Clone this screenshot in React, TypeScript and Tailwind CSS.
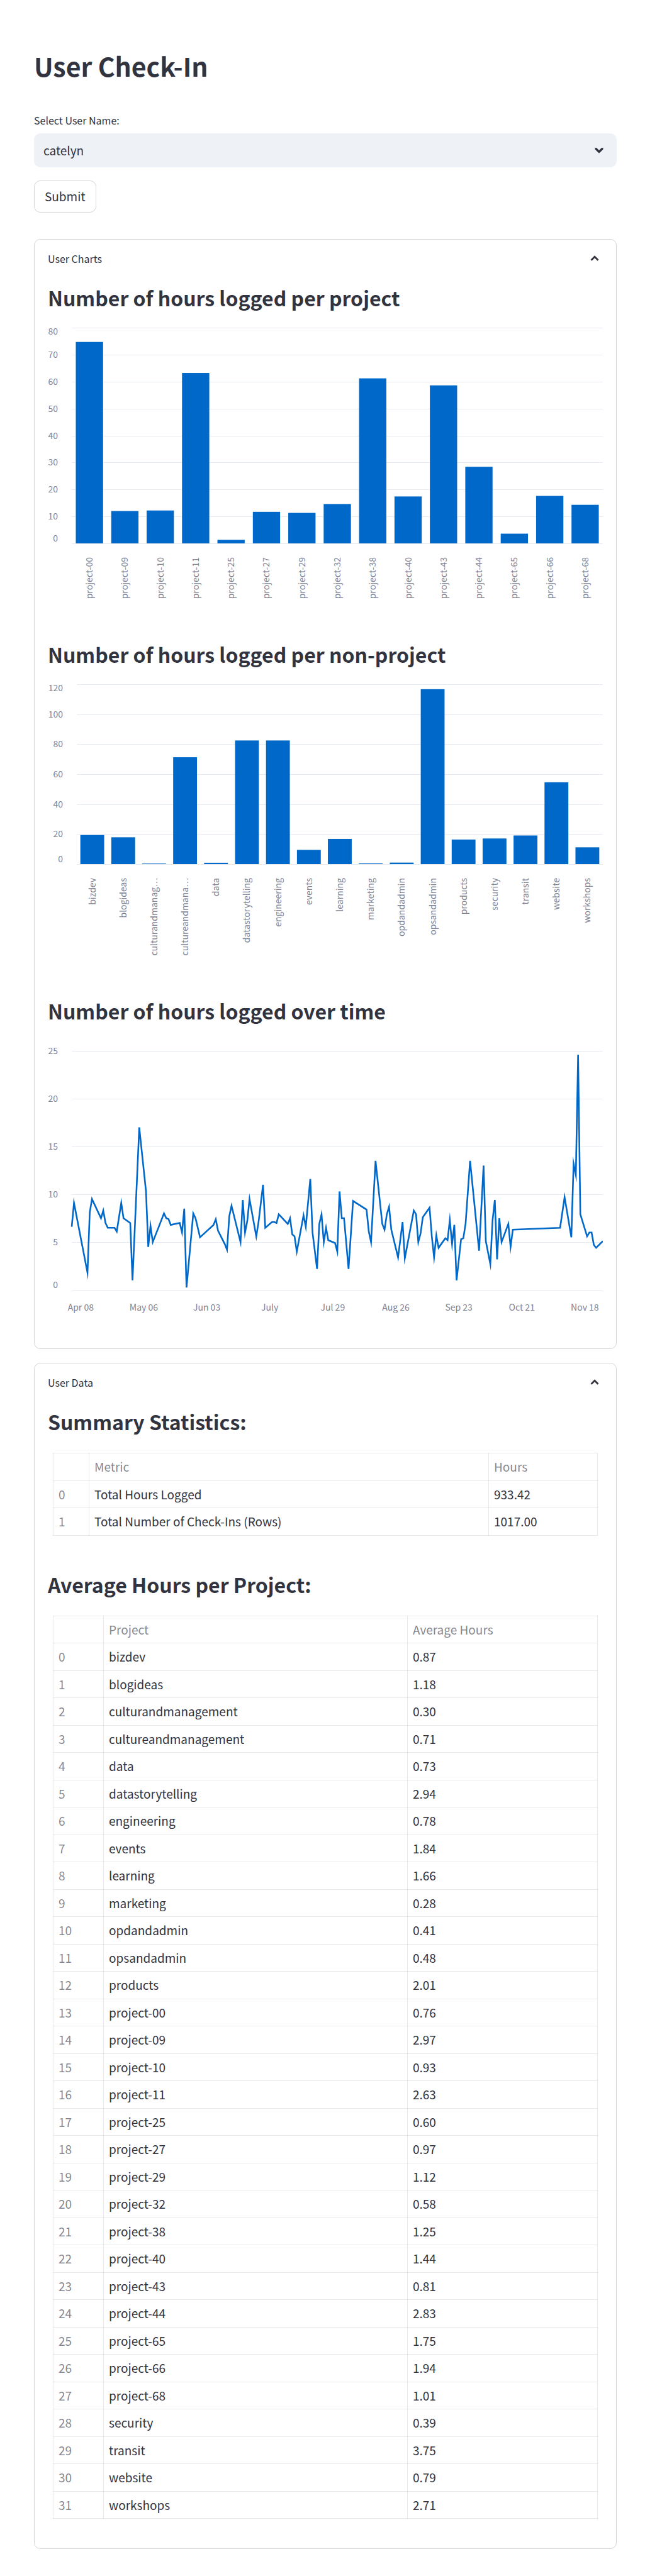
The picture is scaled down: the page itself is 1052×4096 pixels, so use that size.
import { ReactNode } from "react";
import { ChevronDown, ChevronUp } from "lucide-react";

type Bar = [label: string, hours: number];

const projectHours: Bar[] = [
  ["project-00", 74.7],
  ["project-09", 12],
  ["project-10", 12.2],
  ["project-11", 63.2],
  ["project-25", 1.3],
  ["project-27", 11.7],
  ["project-29", 11.3],
  ["project-32", 14.6],
  ["project-38", 61.2],
  ["project-40", 17.4],
  ["project-43", 58.6],
  ["project-44", 28.4],
  ["project-65", 3.6],
  ["project-66", 17.6],
  ["project-68", 14.3],
];

const nonProjectHours: Bar[] = [
  ["bizdev", 19.4],
  ["blogideas", 17.9],
  ["culturandmanag…", 0.4],
  ["cultureandmana…", 71.3],
  ["data", 0.9],
  ["datastorytelling", 82.5],
  ["engineering", 82.5],
  ["events", 9.5],
  ["learning", 16.8],
  ["marketing", 0.5],
  ["opdandadmin", 1],
  ["opsandadmin", 116.7],
  ["products", 16.4],
  ["security", 17.1],
  ["transit", 19.1],
  ["website", 54.6],
  ["workshops", 11.2],
];

// [day since start, hours]
const timeline: [number, number][] = [
  [0, 6.6], [1, 9.1], [7, 1.8], [8, 8.1], [9, 9.5], [13, 7.5], [14, 8.3], [15, 7], [16, 6.5], [19, 6.5],
  [20, 6.1], [22, 9.1], [23, 7.5], [26, 7], [27, 1], [30, 17], [33, 10.3], [34, 4.5], [35, 6.7], [36, 5],
  [41, 8], [42, 7.5], [43, 7.4], [44, 6.8], [48, 7], [49, 6], [50, 8.5], [51, 0.25], [54, 8], [55, 7.5],
  [57, 5.5], [63, 6.8], [64, 7.4], [65, 6.2], [68, 4.8], [69, 4.2], [70, 7.7], [71, 8.8], [75, 5], [76, 9.4],
  [77, 6], [78, 7.2], [79, 9.5], [82, 5.6], [83, 7.1], [85, 11], [86, 6.5], [89, 7.1], [90, 7.1], [91, 7],
  [92, 7.9], [96, 6.9], [97, 7.5], [98, 5.8], [99, 5.6], [100, 4], [103, 7.8], [104, 6.6], [106, 11.6], [107, 6],
  [109, 2.2], [110, 6.9], [111, 7.9], [112, 5], [113, 6.5], [114, 5.2], [117, 4.9], [118, 4], [119, 10.3], [120, 7.5],
  [121, 7.5], [123, 2.2], [125, 9.3], [131, 8.4], [132, 6.1], [133, 5], [135, 13.5], [138, 6.9], [139, 6.3], [140, 7.9],
  [141, 8.7], [142, 6.3], [145, 3.4], [147, 7.1], [148, 3.3], [152, 8.3], [153, 7.9], [154, 5], [155, 5.9], [156, 7.6],
  [159, 8.6], [160, 5.6], [161, 3.4], [162, 5.7], [163, 4.4], [166, 5.4], [167, 5.2], [168, 7.3], [169, 4.8], [170, 6.8],
  [171, 1], [173, 5.3], [174, 5.4], [175, 6.9], [177, 13.5], [181, 4.1], [183, 13], [184, 5.1], [186, 2.7], [187, 7.3],
  [188, 9.4], [189, 3.2], [190, 7.5], [191, 5], [194, 6.9], [195, 4.5], [196, 6.3], [217, 6.5], [219, 9.7], [222, 5.5],
  [223, 13.2], [224, 12], [225, 24.6], [226, 7.9], [229, 5.6], [230, 6], [231, 6], [232, 4.7], [233, 4.4], [236, 5.1],
];

const dateTicks = ["Apr 08", "May 06", "Jun 03", "July", "Jul 29", "Aug 26", "Sep 23", "Oct 21", "Nov 18"];

const summaryRows = [
  ["Total Hours Logged", "933.42"],
  ["Total Number of Check-Ins (Rows)", "1017.00"],
];

const averageRows = [
  ["bizdev", "0.87"],
  ["blogideas", "1.18"],
  ["culturandmanagement", "0.30"],
  ["cultureandmanagement", "0.71"],
  ["data", "0.73"],
  ["datastorytelling", "2.94"],
  ["engineering", "0.78"],
  ["events", "1.84"],
  ["learning", "1.66"],
  ["marketing", "0.28"],
  ["opdandadmin", "0.41"],
  ["opsandadmin", "0.48"],
  ["products", "2.01"],
  ["project-00", "0.76"],
  ["project-09", "2.97"],
  ["project-10", "0.93"],
  ["project-11", "2.63"],
  ["project-25", "0.60"],
  ["project-27", "0.97"],
  ["project-29", "1.12"],
  ["project-32", "0.58"],
  ["project-38", "1.25"],
  ["project-40", "1.44"],
  ["project-43", "0.81"],
  ["project-44", "2.83"],
  ["project-65", "1.75"],
  ["project-66", "1.94"],
  ["project-68", "1.01"],
  ["security", "0.39"],
  ["transit", "3.75"],
  ["website", "0.79"],
  ["workshops", "2.71"],
];

const CHART_WIDTH = 882;
const CHART_HEIGHT = 465;

interface AxisProps {
  left: number;
  top: number;
  bottom: number;
  max: number;
  step: number;
  flushTop?: boolean;
}

function ValueAxis({ left, top, bottom, max, step, flushTop }: AxisProps) {
  const ticks = Array.from({ length: max / step + 1 }, (_, i) => i * step);
  return (
    <g>
      {ticks.map((tick) => {
        const y = Math.round(bottom - (tick / max) * (bottom - top));
        const shift = tick === 0 ? -3 : tick === max && flushTop ? 11 : 5;
        return (
          <g key={tick}>
            <rect x={left} y={y} width={CHART_WIDTH - left} height={1} className="fill-[#e6eaf1]" />
            <text x={left - 22} y={y + shift} textAnchor="end">
              {tick}
            </text>
          </g>
        );
      })}
    </g>
  );
}

function ChartFrame({ label, children }: { label: string; children: ReactNode }) {
  return (
    <svg
      role="img"
      aria-label={label}
      viewBox={`0 0 ${CHART_WIDTH} ${CHART_HEIGHT}`}
      className="mt-3 block w-full fill-[#808495] text-[14px]"
    >
      {children}
    </svg>
  );
}

interface BarChartProps {
  label: string;
  data: Bar[];
  left: number;
  bottom: number;
  max: number;
  step: number;
}

function BarChart({ label, data, left, bottom, max, step }: BarChartProps) {
  const top = 16;
  const band = (CHART_WIDTH - left) / data.length;
  const barWidth = band * 0.77;
  return (
    <ChartFrame label={label}>
      <ValueAxis left={left} top={top} bottom={bottom} max={max} step={step} flushTop />
      {data.map(([name, hours], i) => {
        const center = left + band * (i + 0.5);
        const height = (hours / max) * (bottom - top);
        return (
          <g key={name}>
            <rect
              x={center - barWidth / 2}
              y={bottom - height}
              width={barWidth}
              height={height}
              className="fill-[#0068c9]"
            />
            <text transform={`translate(${center + 5} ${bottom + 22}) rotate(-90)`} textAnchor="end">
              {name}
            </text>
          </g>
        );
      })}
    </ChartFrame>
  );
}

function LineChart() {
  const left = 38;
  const top = 32;
  const bottom = 412;
  const dayWidth = (CHART_WIDTH - left) / 236;
  const points = timeline
    .map(([day, hours]) => `${left + day * dayWidth},${bottom - (hours / 25) * (bottom - top)}`)
    .join(" ");
  return (
    <ChartFrame label="Number of hours logged over time">
      <ValueAxis left={left} top={top} bottom={bottom} max={25} step={5} />
      <polyline points={points} strokeMiterlimit={10} className="fill-none stroke-[#0068c9] stroke-[2.6]" />
      {dateTicks.map((tick, i) => (
        <text key={tick} x={left + (4 + 28 * i) * dayWidth} y={445} textAnchor="middle">
          {tick}
        </text>
      ))}
    </ChartFrame>
  );
}

function Heading({ children }: { children: ReactNode }) {
  return <h2 className="text-[32px] leading-10 font-semibold">{children}</h2>;
}

function Expander({ title, children }: { title: string; children: ReactNode }) {
  return (
    <details open className="group rounded-[10px] border border-[#31333f]/20">
      <summary className="flex h-[60px] cursor-pointer list-none items-center justify-between px-[21px] text-[16px] leading-6">
        {title}
        <ChevronUp
          className="mr-[2px] size-[22px] group-not-open:rotate-180"
          strokeWidth={3}
          strokeLinecap="butt"
          strokeLinejoin="miter"
          aria-hidden
        />
      </summary>
      <div className="px-[21px] pt-3">{children}</div>
    </details>
  );
}

interface DataTableProps {
  head: [string, string];
  rows: string[][];
  widths: [string, string, string];
}

function DataTable({ head, rows, widths }: DataTableProps) {
  const cell = "border border-[#31333f]/10 px-2 py-[7px] text-left font-normal";
  return (
    <div className="mt-[30px] px-2">
      <table className="w-full table-fixed border-collapse text-[19px] leading-normal">
        <colgroup>
          {widths.map((width, i) => (
            <col key={i} className={width} />
          ))}
        </colgroup>
        <thead className="text-[#31333f]/60">
          <tr>
            <th className={cell} aria-label="Index" />
            <th scope="col" className={cell}>{head[0]}</th>
            <th scope="col" className={cell}>{head[1]}</th>
          </tr>
        </thead>
        <tbody>
          {rows.map(([name, value], i) => (
            <tr key={name}>
              <th scope="row" className={`${cell} text-[#31333f]/60`}>{i}</th>
              <td className={cell}>{name}</td>
              <td className={cell}>{value}</td>
            </tr>
          ))}
        </tbody>
      </table>
    </div>
  );
}

export default function App() {
  return (
    <main className="bg-white pt-[78px] pr-[72px] pb-11 pl-[54px] font-['Noto_Sans_CJK_SC','Noto_Sans',sans-serif] text-[#31333f]">
      <h1 className="text-[41px] leading-[52px] font-semibold">User Check-In</h1>

      <form className="mt-[49px]" onSubmit={(event) => event.preventDefault()}>
        <label htmlFor="user-name" className="block text-[16px] leading-6">
          Select User Name:
        </label>
        <div className="relative mt-[9px]">
          <select
            id="user-name"
            defaultValue="catelyn"
            className="block h-[54px] w-full appearance-none rounded-[10px] bg-[#eef2f7] px-[15px] text-[19px]"
          >
            <option>catelyn</option>
          </select>
          <ChevronDown
            className="pointer-events-none absolute top-[17px] right-[18px] size-5"
            strokeWidth={4}
            aria-hidden
          />
        </div>
        <button
          type="submit"
          className="mt-[21px] block h-[51px] rounded-[10px] border border-[#31333f]/20 px-4 text-[19px]"
        >
          Submit
        </button>
      </form>

      <div className="mt-[42px] flex flex-col gap-[22px]">
        <Expander title="User Charts">
          <div className="flex flex-col gap-[50px] pb-10">
            <section>
              <Heading>Number of hours logged per project</Heading>
              <BarChart label="Number of hours logged per project" data={projectHours} left={38} bottom={359} max={80} step={10} />
            </section>
            <section>
              <Heading>Number of hours logged per non-project</Heading>
              <BarChart label="Number of hours logged per non-project" data={nonProjectHours} left={46} bottom={302} max={120} step={20} />
            </section>
            <section>
              <Heading>Number of hours logged over time</Heading>
              <LineChart />
            </section>
          </div>
        </Expander>

        <Expander title="User Data">
          <div className="flex flex-col gap-[57px] pb-[47px]">
            <section>
              <Heading>Summary Statistics:</Heading>
              <DataTable head={["Metric", "Hours"]} rows={summaryRows} widths={["w-[57px]", "w-auto", "w-[173px]"]} />
            </section>
            <section>
              <Heading>Average Hours per Project:</Heading>
              <DataTable head={["Project", "Average Hours"]} rows={averageRows} widths={["w-[80px]", "w-auto", "w-[302px]"]} />
            </section>
          </div>
        </Expander>
      </div>
    </main>
  );
}
